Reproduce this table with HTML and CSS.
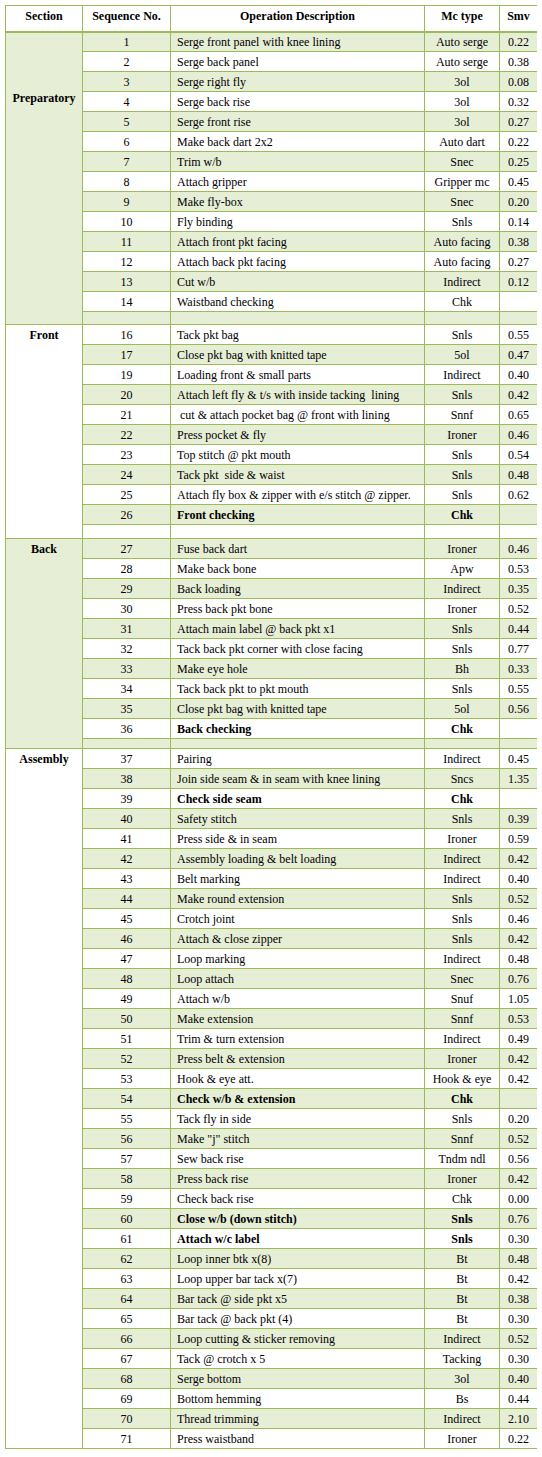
FILE: index.html
```html
<!DOCTYPE html>
<html>
<head>
<meta charset="utf-8">
<link rel="stylesheet" href="styles.css">
</head>
<body>
<table class="ops">
<colgroup>
<col class="c-sec"><col class="c-seq"><col class="c-desc"><col class="c-mc"><col class="c-smv">
</colgroup>
<thead>
<tr class="head"><th>Section</th><th>Sequence No.</th><th>Operation Description</th><th>Mc type</th><th>Smv</th></tr>
</thead>
<tbody>
<tr><td class="sec sec-prep" rowspan="15">Preparatory</td><td class="num">1</td><td class="desc">Serge front panel with knee lining</td><td class="mc">Auto serge</td><td class="num">0.22</td></tr>
<tr><td class="num">2</td><td class="desc">Serge back panel</td><td class="mc">Auto serge</td><td class="num">0.38</td></tr>
<tr><td class="num">3</td><td class="desc">Serge right fly</td><td class="mc">3ol</td><td class="num">0.08</td></tr>
<tr><td class="num">4</td><td class="desc">Serge back rise</td><td class="mc">3ol</td><td class="num">0.32</td></tr>
<tr><td class="num">5</td><td class="desc">Serge front rise</td><td class="mc">3ol</td><td class="num">0.27</td></tr>
<tr><td class="num">6</td><td class="desc">Make back dart 2x2</td><td class="mc">Auto dart</td><td class="num">0.22</td></tr>
<tr><td class="num">7</td><td class="desc">Trim w/b</td><td class="mc">Snec</td><td class="num">0.25</td></tr>
<tr><td class="num">8</td><td class="desc">Attach gripper</td><td class="mc">Gripper mc</td><td class="num">0.45</td></tr>
<tr><td class="num">9</td><td class="desc">Make fly-box</td><td class="mc">Snec</td><td class="num">0.20</td></tr>
<tr><td class="num">10</td><td class="desc">Fly binding</td><td class="mc">Snls</td><td class="num">0.14</td></tr>
<tr><td class="num">11</td><td class="desc">Attach front pkt facing</td><td class="mc">Auto facing</td><td class="num">0.38</td></tr>
<tr><td class="num">12</td><td class="desc">Attach back pkt facing</td><td class="mc">Auto facing</td><td class="num">0.27</td></tr>
<tr><td class="num">13</td><td class="desc">Cut w/b</td><td class="mc">Indirect</td><td class="num">0.12</td></tr>
<tr><td class="num">14</td><td class="desc">Waistband checking</td><td class="mc">Chk</td><td class="num"></td></tr>
<tr class="gap gap-prep"><td></td><td></td><td></td><td></td></tr>

<tr><td class="sec" rowspan="11">Front</td><td class="num">16</td><td class="desc">Tack pkt bag</td><td class="mc">Snls</td><td class="num">0.55</td></tr>
<tr><td class="num">17</td><td class="desc">Close pkt bag with knitted tape</td><td class="mc">5ol</td><td class="num">0.47</td></tr>
<tr><td class="num">19</td><td class="desc">Loading front &amp; small parts</td><td class="mc">Indirect</td><td class="num">0.40</td></tr>
<tr><td class="num">20</td><td class="desc">Attach left fly &amp; t/s with inside tacking  lining</td><td class="mc">Snls</td><td class="num">0.42</td></tr>
<tr><td class="num">21</td><td class="desc"> cut &amp; attach pocket bag @ front with lining</td><td class="mc">Snnf</td><td class="num">0.65</td></tr>
<tr><td class="num">22</td><td class="desc">Press pocket &amp; fly</td><td class="mc">Ironer</td><td class="num">0.46</td></tr>
<tr><td class="num">23</td><td class="desc">Top stitch @ pkt mouth</td><td class="mc">Snls</td><td class="num">0.54</td></tr>
<tr><td class="num">24</td><td class="desc">Tack pkt  side &amp; waist</td><td class="mc">Snls</td><td class="num">0.48</td></tr>
<tr><td class="num">25</td><td class="desc">Attach fly box &amp; zipper with e/s stitch @ zipper.</td><td class="mc">Snls</td><td class="num">0.62</td></tr>
<tr class="bold"><td class="num">26</td><td class="desc">Front checking</td><td class="mc">Chk</td><td class="num"></td></tr>
<tr class="gap gap-front"><td></td><td></td><td></td><td></td></tr>

<tr><td class="sec" rowspan="11">Back</td><td class="num">27</td><td class="desc">Fuse back dart</td><td class="mc">Ironer</td><td class="num">0.46</td></tr>
<tr><td class="num">28</td><td class="desc">Make back bone</td><td class="mc">Apw</td><td class="num">0.53</td></tr>
<tr><td class="num">29</td><td class="desc">Back loading</td><td class="mc">Indirect</td><td class="num">0.35</td></tr>
<tr><td class="num">30</td><td class="desc">Press back pkt bone</td><td class="mc">Ironer</td><td class="num">0.52</td></tr>
<tr><td class="num">31</td><td class="desc">Attach main label @ back pkt x1</td><td class="mc">Snls</td><td class="num">0.44</td></tr>
<tr><td class="num">32</td><td class="desc">Tack back pkt corner with close facing</td><td class="mc">Snls</td><td class="num">0.77</td></tr>
<tr><td class="num">33</td><td class="desc">Make eye hole</td><td class="mc">Bh</td><td class="num">0.33</td></tr>
<tr><td class="num">34</td><td class="desc">Tack back pkt to pkt mouth</td><td class="mc">Snls</td><td class="num">0.55</td></tr>
<tr><td class="num">35</td><td class="desc">Close pkt bag with knitted tape</td><td class="mc">5ol</td><td class="num">0.56</td></tr>
<tr class="bold"><td class="num">36</td><td class="desc">Back checking</td><td class="mc">Chk</td><td class="num"></td></tr>
<tr class="gap gap-back"><td></td><td></td><td></td><td></td></tr>

<tr><td class="sec" rowspan="35">Assembly</td><td class="num">37</td><td class="desc">Pairing</td><td class="mc">Indirect</td><td class="num">0.45</td></tr>
<tr><td class="num">38</td><td class="desc">Join side seam &amp; in seam with knee lining</td><td class="mc">Sncs</td><td class="num">1.35</td></tr>
<tr class="bold"><td class="num">39</td><td class="desc">Check side seam</td><td class="mc">Chk</td><td class="num"></td></tr>
<tr><td class="num">40</td><td class="desc">Safety stitch</td><td class="mc">Snls</td><td class="num">0.39</td></tr>
<tr><td class="num">41</td><td class="desc">Press side &amp; in seam</td><td class="mc">Ironer</td><td class="num">0.59</td></tr>
<tr><td class="num">42</td><td class="desc">Assembly loading &amp; belt loading</td><td class="mc">Indirect</td><td class="num">0.42</td></tr>
<tr><td class="num">43</td><td class="desc">Belt marking</td><td class="mc">Indirect</td><td class="num">0.40</td></tr>
<tr><td class="num">44</td><td class="desc">Make round extension</td><td class="mc">Snls</td><td class="num">0.52</td></tr>
<tr><td class="num">45</td><td class="desc">Crotch joint</td><td class="mc">Snls</td><td class="num">0.46</td></tr>
<tr><td class="num">46</td><td class="desc">Attach &amp; close zipper</td><td class="mc">Snls</td><td class="num">0.42</td></tr>
<tr><td class="num">47</td><td class="desc">Loop marking</td><td class="mc">Indirect</td><td class="num">0.48</td></tr>
<tr><td class="num">48</td><td class="desc">Loop attach</td><td class="mc">Snec</td><td class="num">0.76</td></tr>
<tr><td class="num">49</td><td class="desc">Attach w/b</td><td class="mc">Snuf</td><td class="num">1.05</td></tr>
<tr><td class="num">50</td><td class="desc">Make extension</td><td class="mc">Snnf</td><td class="num">0.53</td></tr>
<tr><td class="num">51</td><td class="desc">Trim &amp; turn extension</td><td class="mc">Indirect</td><td class="num">0.49</td></tr>
<tr><td class="num">52</td><td class="desc">Press belt &amp; extension</td><td class="mc">Ironer</td><td class="num">0.42</td></tr>
<tr><td class="num">53</td><td class="desc">Hook &amp; eye att.</td><td class="mc">Hook &amp; eye</td><td class="num">0.42</td></tr>
<tr class="bold"><td class="num">54</td><td class="desc">Check w/b &amp; extension</td><td class="mc">Chk</td><td class="num"></td></tr>
<tr><td class="num">55</td><td class="desc">Tack fly in side</td><td class="mc">Snls</td><td class="num">0.20</td></tr>
<tr><td class="num">56</td><td class="desc">Make "j" stitch</td><td class="mc">Snnf</td><td class="num">0.52</td></tr>
<tr><td class="num">57</td><td class="desc">Sew back rise</td><td class="mc">Tndm ndl</td><td class="num">0.56</td></tr>
<tr><td class="num">58</td><td class="desc">Press back rise</td><td class="mc">Ironer</td><td class="num">0.42</td></tr>
<tr><td class="num">59</td><td class="desc">Check back rise</td><td class="mc">Chk</td><td class="num">0.00</td></tr>
<tr class="bold"><td class="num">60</td><td class="desc">Close w/b (down stitch)</td><td class="mc">Snls</td><td class="num">0.76</td></tr>
<tr class="bold"><td class="num">61</td><td class="desc">Attach w/c label</td><td class="mc">Snls</td><td class="num">0.30</td></tr>
<tr><td class="num">62</td><td class="desc">Loop inner btk x(8)</td><td class="mc">Bt</td><td class="num">0.48</td></tr>
<tr><td class="num">63</td><td class="desc">Loop upper bar tack x(7)</td><td class="mc">Bt</td><td class="num">0.42</td></tr>
<tr><td class="num">64</td><td class="desc">Bar tack @ side pkt x5</td><td class="mc">Bt</td><td class="num">0.38</td></tr>
<tr><td class="num">65</td><td class="desc">Bar tack @ back pkt (4)</td><td class="mc">Bt</td><td class="num">0.30</td></tr>
<tr><td class="num">66</td><td class="desc">Loop cutting &amp; sticker removing</td><td class="mc">Indirect</td><td class="num">0.52</td></tr>
<tr><td class="num">67</td><td class="desc">Tack @ crotch x 5</td><td class="mc">Tacking</td><td class="num">0.30</td></tr>
<tr><td class="num">68</td><td class="desc">Serge bottom</td><td class="mc">3ol</td><td class="num">0.40</td></tr>
<tr><td class="num">69</td><td class="desc">Bottom hemming</td><td class="mc">Bs</td><td class="num">0.44</td></tr>
<tr><td class="num">70</td><td class="desc">Thread trimming</td><td class="mc">Indirect</td><td class="num">2.10</td></tr>
<tr><td class="num">71</td><td class="desc">Press waistband</td><td class="mc">Ironer</td><td class="num">0.22</td></tr>
</tbody>
</table>
</body>
</html>
```

FILE: styles.css
```css
html, body {
  background: #ffffff;
}
body {
  margin: 5px;
  font-family: "Liberation Serif", "Times New Roman", serif;
  font-size: 12px;
  color: #000000;
}
.ops {
  border-collapse: collapse;
  table-layout: fixed;
  width: 532px;
}
.c-sec { width: 77px; }
.c-seq { width: 88px; }
.c-desc { width: 254px; }
.c-mc { width: 75px; }
.c-smv { width: 38px; }

.ops th,
.ops td {
  border: 1px solid #9bbb59;
  padding: 0;
  line-height: 14px;
  white-space: pre;
  overflow: hidden;
}
.ops th {
  font-weight: bold;
  text-align: center;
  vertical-align: top;
  padding-top: 3px;
}
.head {
  height: 26px;
}
.head th {
  border-bottom: 2px solid #9bbb59;
}
.ops tbody tr {
  height: 20px;
}
.ops tbody tr:nth-child(odd) > td {
  background: #e6eed6;
}
.num, .mc {
  text-align: center;
}
.desc {
  text-align: left;
  padding-left: 6px !important;
}
.sec {
  font-weight: bold;
  text-align: center;
  vertical-align: top;
  padding-top: 3px !important;
}
.sec-prep {
  padding-top: 58px !important;
}
.bold .desc,
.bold .mc {
  font-weight: bold;
}
.ops tbody tr.gap-prep { height: 13px; }
.ops tbody tr.gap-front { height: 14px; }
.ops tbody tr.gap-back { height: 10px; }
```
